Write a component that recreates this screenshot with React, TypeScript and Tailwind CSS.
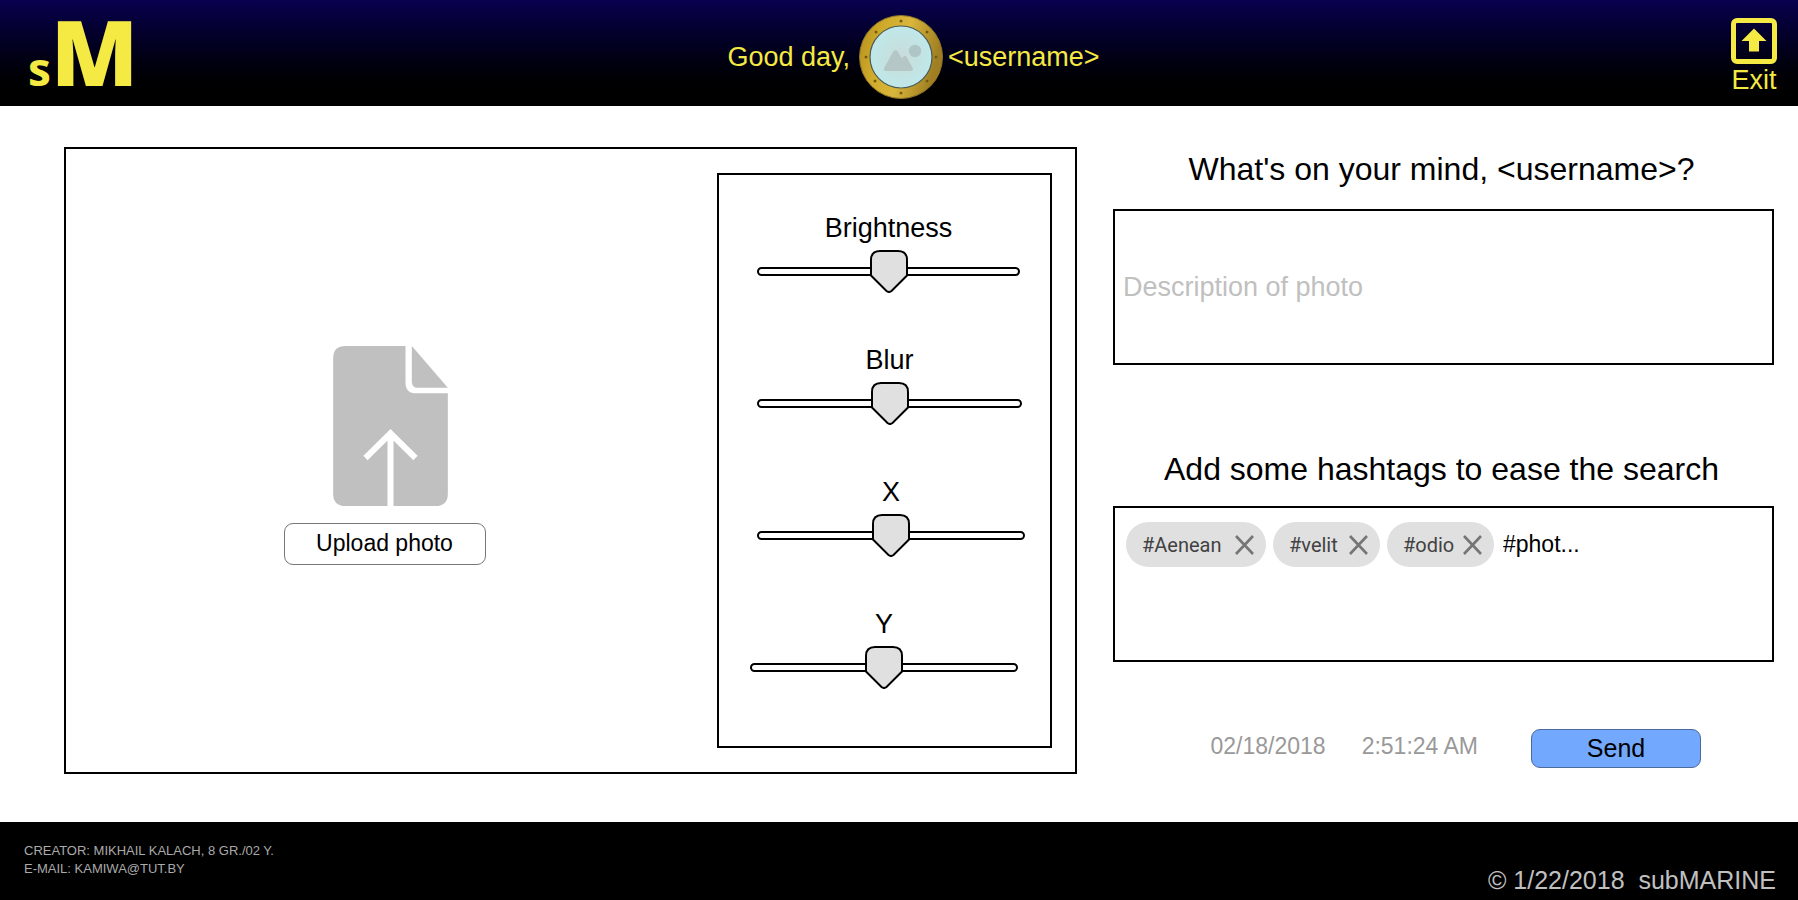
import { useState } from "react";

const RIVETS = [
  [42, 6],
  [68, 17],
  [77, 42],
  [68, 66],
  [42, 78],
  [16, 66],
  [7, 42],
  [17, 17],
];

function Porthole() {
  return (
    <svg viewBox="0 0 84 84" className="size-[84px] shrink-0" aria-hidden="true">
      <defs>
        <linearGradient id="brass" x1="0" y1="0" x2="1" y2="0.25">
          <stop offset="0" stopColor="#b28e1c" />
          <stop offset="0.3" stopColor="#cfaa2a" />
          <stop offset="0.6" stopColor="#d9b63b" />
          <stop offset="1" stopColor="#a07f22" />
        </linearGradient>
        <radialGradient id="glass">
          <stop offset="0" stopColor="#c9dcdb" />
          <stop offset="0.7" stopColor="#c2e4e4" />
          <stop offset="1" stopColor="#bfe8ea" />
        </radialGradient>
      </defs>
      <circle cx="42" cy="42" r="41.5" fill="url(#brass)" stroke="#8f7428" />
      {RIVETS.map(([x, y]) => (
        <g key={`${x}-${y}`}>
          <circle cx={x} cy={y} r="1.6" fill="#8a6c17" />
          <circle cx={x} cy={y} r="0.7" fill="#4d3b08" />
        </g>
      ))}
      <circle cx="42" cy="42" r="31" fill="url(#glass)" stroke="#4b5a58" strokeWidth="1.2" />
      <path
        d="M27 56 C25 56 24.300 54.300 25.200 52.700 L34.300 36.500 C35.300 34.700 37.700 34.700 38.700 36.500 L42.700 43.300 L44.200 41.700 C45.300 40.500 46.700 40.700 47.600 42 L53.700 53 C54.500 54.600 53.700 56 52 56 Z"
        fill="#b4c6c5"
      />
      <circle cx="56" cy="36" r="6.2" fill="#b0c6c6" />
    </svg>
  );
}

function ExitIcon() {
  return (
    <svg viewBox="0 0 46 46" className="size-[46px]" aria-hidden="true">
      <rect x="2.5" y="2.5" width="41" height="41" rx="3.5" fill="none" stroke="#f5e943" strokeWidth="5" />
      <path d="M23 10.5 L35.5 23 H28 V33.5 H18 V23 H10.5 Z" fill="#f5e943" />
    </svg>
  );
}

function UploadIcon() {
  return (
    <svg viewBox="0 0 344 480" className="ml-3 h-[160px] w-[115px]" aria-hidden="true">
      <path
        d="M37 0 H217 V110 Q217 142 250 142 H344 V443 Q344 480 307 480 H37 Q0 480 0 443 V37 Q0 0 37 0 Z"
        fill="#c0c0c0"
      />
      <path d="M236 0 L344 125 H254 Q236 125 236 107 Z" fill="#c0c0c0" />
      <path d="M97 336 L172 262 L247 336 M172 264 V480" fill="none" stroke="#fff" strokeWidth="18" />
    </svg>
  );
}

function Slider({ label, className }: { label: string; className: string }) {
  const [value, setValue] = useState(50);
  const id = `slider-${label.toLowerCase()}`;
  return (
    <div className={`flex max-w-full flex-col items-center gap-1.5 ${className}`}>
      <label htmlFor={id} className="text-[27px] leading-8">
        {label}
      </label>
      <div className="relative h-[43px] w-full pt-[17px]">
        <div className="h-[9px] w-full rounded-full border-2 border-black bg-white" />
        <svg
          viewBox="0 0 38 43"
          className="absolute top-0 h-[43px] w-[38px]"
          style={{ left: `calc((100% - 38px) * ${value / 100})` }}
          aria-hidden="true"
        >
          <path
            d="M10 1 H28 Q37 1 37 10 V25.5 L21.5 41 Q19 43 16.5 41 L1 25.5 V10 Q1 1 10 1 Z"
            fill="#e0e0e0"
            stroke="#000"
            strokeWidth="2"
          />
        </svg>
        <input
          id={id}
          type="range"
          min={0}
          max={100}
          value={value}
          onChange={(e) => setValue(Number(e.target.value))}
          className="absolute inset-0 h-full w-full cursor-pointer opacity-0"
        />
      </div>
    </div>
  );
}

function Chip({ text, onRemove }: { text: string; onRemove: () => void }) {
  return (
    <span
      className={`flex h-[45px] items-center justify-between gap-2 rounded-full bg-[#e0e0e0] pr-3 pl-4 font-[Roboto,sans-serif] text-xl text-[#424242] ${
        text.length > 6 ? "min-w-[140px]" : "min-w-[107px]"
      }`}
    >
      {text}
      <button type="button" onClick={onRemove} aria-label={`Remove ${text}`} className="cursor-pointer">
        <svg viewBox="0 0 19 20" className="block h-5 w-[19px]" aria-hidden="true">
          <path d="M1 1 L18 19 M18 1 L1 19" stroke="#757575" strokeWidth="2.6" />
        </svg>
      </button>
    </span>
  );
}

const SLIDERS = [
  { label: "Brightness", className: "ml-[38px] w-[263px]" },
  { label: "Blur", className: "ml-[38px] w-[265px]" },
  { label: "X", className: "ml-[38px] w-[268px]" },
  { label: "Y", className: "ml-[31px] w-[268px]" },
];

export default function App() {
  const [tags, setTags] = useState(["#Aenean", "#velit", "#odio"]);
  const [draft, setDraft] = useState("#phot...");
  const [description, setDescription] = useState("");

  return (
    <div className="flex min-h-screen flex-col bg-white font-['Liberation_Sans',Arial,sans-serif] text-black">
      <header className="grid grid-cols-[1fr_auto_1fr] items-center bg-linear-to-b from-[#09004f] to-black pt-[15px] pr-[21px] pb-[7px] pl-7 text-[27px] text-[#f5e943]">
        <a href="#home" className="flex items-baseline pb-3 font-['Open_Sans',sans-serif]" aria-label="sM">
          <span className="text-[46px] leading-5 font-bold">s</span>
          <span className="text-[90px] leading-[64px] font-extrabold">M</span>
        </a>
        <div className="flex items-center gap-[5px] pl-[22px]">
          <span className="pr-1">Good day,</span>
          <Porthole />
          <span>&lt;username&gt;</span>
        </div>
        <a href="#exit" className="flex flex-col items-center justify-self-end leading-8">
          <ExitIcon />
          Exit
        </a>
      </header>

      <main className="grid flex-1 grid-cols-[1013fr_661fr] gap-9 pt-[41px] pr-6 pb-12 pl-16">
        <section className="flex border-2 border-black py-6 pr-[23px] pl-6">
          <div className="flex flex-1 flex-col items-center justify-center gap-[17px] pr-[38px] pb-2.5">
            <UploadIcon />
            <button
              type="button"
              className="h-[42px] w-[202px] cursor-pointer rounded-[9px] border border-[#777] pb-0.5 text-[23px] leading-7"
            >
              Upload photo
            </button>
          </div>
          <div className="flex w-[335px] flex-col items-start gap-[51px] border-2 border-black pt-[37px]">
            {SLIDERS.map((s) => (
              <Slider key={s.label} label={s.label} className={s.className} />
            ))}
          </div>
        </section>

        <form className="flex flex-col pt-1" onSubmit={(e) => e.preventDefault()}>
          <label htmlFor="description" className="pr-1 text-center text-[32px] leading-9">
            What's on your mind, &lt;username&gt;?
          </label>
          <textarea
            id="description"
            placeholder="Description of photo"
            value={description}
            onChange={(e) => setDescription(e.target.value)}
            className="mt-[22px] h-[156px] w-full resize-none border-2 border-black px-2 pt-[60px] text-[27px] leading-8 outline-none placeholder:text-[#c0c0c0]"
          />
          <label htmlFor="hashtags" className="mt-[86px] pr-1 text-center text-[32px] leading-9">
            Add some hashtags to ease the search
          </label>
          <div className="mt-[19px] flex h-[156px] flex-wrap content-start items-center gap-[7px] border-2 border-black px-[11px] py-[14px]">
            {tags.map((tag) => (
              <Chip key={tag} text={tag} onRemove={() => setTags(tags.filter((t) => t !== tag))} />
            ))}
            <input
              id="hashtags"
              value={draft}
              onChange={(e) => setDraft(e.target.value)}
              className="min-w-20 flex-1 pb-0.5 pl-0.5 text-[23px] leading-7 outline-none"
            />
          </div>
          <div className="mt-[67px] flex items-center justify-end pr-[73px]">
            <div className="flex gap-9 pr-[53px] pb-1.5 text-[23px] leading-7 text-[#999]">
              <time>02/18/2018</time>
              <time>2:51:24 AM</time>
            </div>
            <button
              type="submit"
              className="h-[39px] w-[170px] cursor-pointer rounded-[9px] border border-[#4c6a9b] bg-[#73a8ff] pb-0.5 text-[25px] leading-7"
            >
              Send
            </button>
          </div>
        </form>
      </main>

      <footer className="flex items-end justify-between bg-black pt-5 pr-[22px] pb-1.5 pl-6 text-[#c0c0c0]">
        <p className="self-start text-[13px] leading-[18px] text-[#aaa]">
          CREATOR: MIKHAIL KALACH, 8 GR./02 Y.
          <br />
          E-MAIL: KAMIWA@TUT.BY
        </p>
        <p className="pt-6 text-[25px] leading-7 whitespace-pre">© 1/22/2018  subMARINE</p>
      </footer>
    </div>
  );
}
